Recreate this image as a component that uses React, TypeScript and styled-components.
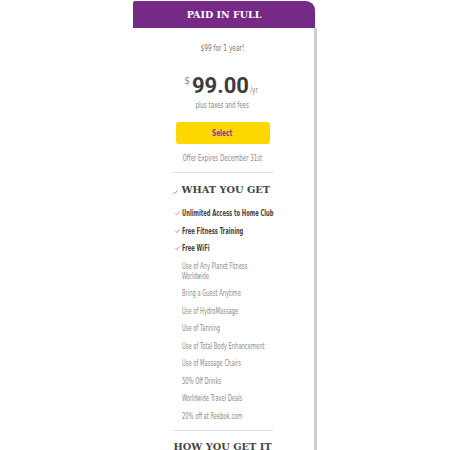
import React from 'react';
import styled, { createGlobalStyle } from 'styled-components';

const GlobalStyle = createGlobalStyle`
  html, body {
    margin: 0;
    padding: 0;
    background: #ffffff;
  }
  body {
    font-family: "DejaVu Sans Condensed", "Liberation Sans", sans-serif;
    color: #666;
  }
`;

const Page = styled.div`
  height: 450px;
  overflow: hidden;
  padding-left: 133px;
  padding-top: 1px;
  box-sizing: border-box;
`;

const Card = styled.div`
  width: 184px;
`;

const Header = styled.div`
  width: 182px;
  height: 27px;
  background: #762a86;
  border-radius: 2px 9px 0 0;
  display: flex;
  align-items: center;
  justify-content: center;
  color: #fff;
  font-family: "DejaVu Serif", "Liberation Serif", serif;
  font-weight: bold;
  font-size: 9.5px;
`;

const Body = styled.div`
  border-right: 3px solid #cfcfcf;
  min-height: 440px;
  display: flex;
  flex-direction: column;
  align-items: center;
  padding-right: 2px;
  & > * {
    flex-shrink: 0;
  }
`;

/* the reference uses a narrow grotesque; squeeze the condensed face to match */
const Narrow = styled.span<{ $origin?: string; $scale?: number }>`
  display: inline-block;
  white-space: nowrap;
  transform: scaleX(${({ $scale }) => $scale ?? 0.72});
  transform-origin: ${({ $origin }) => $origin ?? 'center'};
`;

const Tagline = styled.div`
  margin-top: 14px;
  font-size: 9px;
  line-height: 12px;
  color: #777;
`;

const Price = styled.div`
  margin-top: 21px;
  display: flex;
  align-items: flex-start;
  height: 22px;
  color: #3c3c3c;
`;

const Currency = styled.span`
  font-size: 10px;
  line-height: 10px;
  color: #888;
  margin-top: 1px;
  margin-right: 2px;
`;

const Amount = styled.span`
  font-family: "Roboto", "Liberation Sans", sans-serif;
  font-weight: bold;
  font-size: 22px;
  line-height: 22px;
`;

const Period = styled.span`
  font-size: 9px;
  line-height: 10px;
  color: #888;
  align-self: flex-end;
  margin-left: 1px;
  margin-bottom: 2px;
`;

const Note = styled.div`
  margin-top: 2px;
  font-size: 8.5px;
  line-height: 12px;
  color: #888;
`;

const SelectButton = styled.button`
  margin-top: 11px;
  width: 94px;
  height: 22px;
  padding: 0;
  background: #fcd800;
  border: none;
  border-radius: 3px;
  color: #8a3b8f;
  font-family: inherit;
  font-weight: bold;
  font-size: 9px;
  cursor: pointer;
`;

const Expires = styled.div`
  margin-top: 8px;
  font-size: 8.5px;
  line-height: 12px;
  color: #8d8d8d;
`;

const Divider = styled.div<{ $gap: number }>`
  width: 100px;
  height: 1px;
  background: #e2e2e2;
  margin-top: ${({ $gap }) => $gap}px;
`;

const Section = styled.div`
  width: 100px;
  display: flex;
  flex-direction: column;
`;

const Heading = styled.h2<{ $withCheck?: boolean; $gap: number }>`
  margin: ${({ $gap }) => $gap}px 0 0;
  display: flex;
  align-items: center;
  justify-content: ${({ $withCheck }) => ($withCheck ? 'flex-start' : 'center')};
  font-family: "DejaVu Serif", "Liberation Serif", serif;
  font-weight: bold;
  font-size: 9.8px;
  line-height: 14px;
  color: #444;
  white-space: nowrap;
`;

const List = styled.ul`
  list-style: none;
  margin: 11px 0 0;
  padding: 0 0 0 2px;
  display: flex;
  flex-direction: column;
  gap: 7.5px;
`;

const Item = styled.li<{ $included?: boolean }>`
  display: flex;
  align-items: flex-start;
  font-size: 8.5px;
  line-height: 10px;
  color: ${({ $included }) => ($included ? '#444' : '#8a8a8a')};
  font-weight: ${({ $included }) => ($included ? 'bold' : 'normal')};
  padding-left: ${({ $included }) => ($included ? '0' : '7px')};
`;

const CheckMark = styled.svg<{ $space: number }>`
  flex-shrink: 0;
  margin-top: 3px;
  margin-right: ${({ $space }) => $space}px;
`;

const Check = ({ space = 2 }: { space?: number }) => (
  <CheckMark $space={space} width="5" height="4" viewBox="0 0 5 4">
    <path d="M0.4 2.3 L1.7 3.4 L4.6 0.6" fill="none" stroke="#b55bc4" strokeWidth="0.8" />
  </CheckMark>
);

const included = ['Unlimited Access to Home Club', 'Free Fitness Training', 'Free WiFi'];
const extras: string[][] = [
  ['Use of Any Planet Fitness', 'Worldwide'],
  ['Bring a Guest Anytime'],
  ['Use of HydroMassage'],
  ['Use of Tanning'],
  ['Use of Total Body Enhancement'],
  ['Use of Massage Chairs'],
  ['50% Off Drinks'],
  ['Worldwide Travel Deals'],
  ['20% off at Reebok.com'],
];

const App = () => {
  return (
    <Page>
      <GlobalStyle />
      <Card>
        <Header>PAID IN FULL</Header>
        <Body>
          <Tagline>
            <Narrow>$99 for 1 year!</Narrow>
          </Tagline>
          <Price>
            <Currency>$</Currency>
            <Amount>99.00</Amount>
            <Period>
              <Narrow $origin="left">/yr</Narrow>
            </Period>
          </Price>
          <Note>
            <Narrow>plus taxes and fees</Narrow>
          </Note>
          <SelectButton>
            <Narrow>Select</Narrow>
          </SelectButton>
          <Expires>
            <Narrow>Offer Expires December 31st</Narrow>
          </Expires>
          <Divider $gap={8} />
          <Section>
            <Heading $withCheck $gap={10}>
              <Check space={4} />
              WHAT YOU GET
            </Heading>
            <List>
              {included.map((t) => (
                <Item key={t} $included>
                  <Check />
                  <Narrow $origin="left" $scale={0.68}>{t}</Narrow>
                </Item>
              ))}
              {extras.map((lines) => (
                <Item key={lines.join(' ')}>
                  <Narrow $origin="left" $scale={0.68}>
                    {lines.map((l, i) => (
                      <React.Fragment key={l}>
                        {i > 0 && <br />}
                        {l}
                      </React.Fragment>
                    ))}
                  </Narrow>
                </Item>
              ))}
            </List>
          </Section>
          <Divider $gap={9} />
          <Heading $gap={9}>HOW YOU GET IT</Heading>
        </Body>
      </Card>
    </Page>
  );
};

export default App;
